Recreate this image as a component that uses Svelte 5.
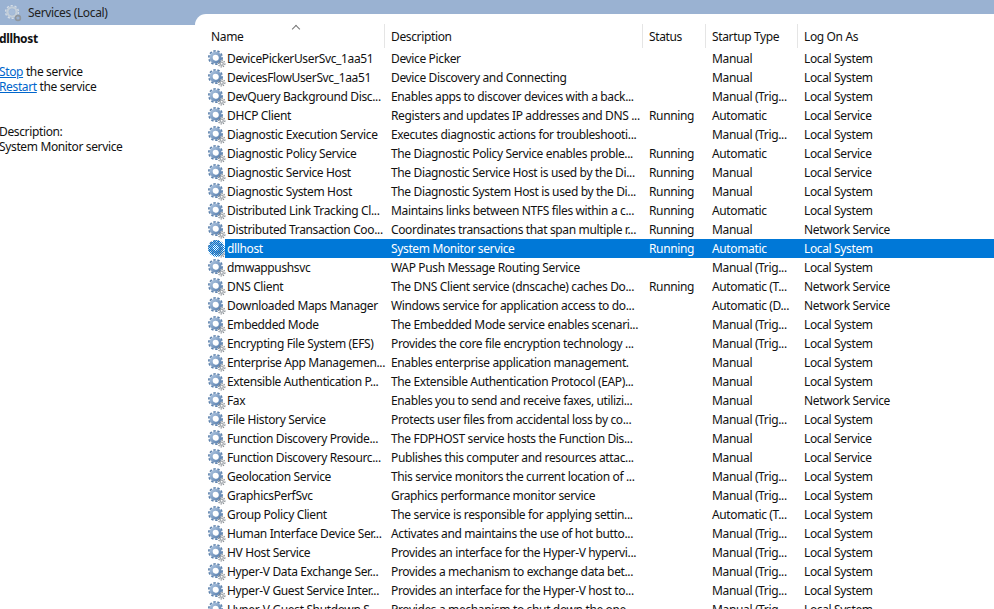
<script>
  const rows = [
    ['DevicePickerUserSvc_1aa51', 'Device Picker', '', 'Manual', 'Local System'],
    ['DevicesFlowUserSvc_1aa51', 'Device Discovery and Connecting', '', 'Manual', 'Local System'],
    ['DevQuery Background Disc...', 'Enables apps to discover devices with a back...', '', 'Manual (Trig...', 'Local System'],
    ['DHCP Client', 'Registers and updates IP addresses and DNS ...', 'Running', 'Automatic', 'Local Service'],
    ['Diagnostic Execution Service', 'Executes diagnostic actions for troubleshooti...', '', 'Manual (Trig...', 'Local System'],
    ['Diagnostic Policy Service', 'The Diagnostic Policy Service enables proble...', 'Running', 'Automatic', 'Local Service'],
    ['Diagnostic Service Host', 'The Diagnostic Service Host is used by the Di...', 'Running', 'Manual', 'Local Service'],
    ['Diagnostic System Host', 'The Diagnostic System Host is used by the Di...', 'Running', 'Manual', 'Local System'],
    ['Distributed Link Tracking Cl...', 'Maintains links between NTFS files within a c...', 'Running', 'Automatic', 'Local System'],
    ['Distributed Transaction Coo...', 'Coordinates transactions that span multiple r...', 'Running', 'Manual', 'Network Service'],
    ['dllhost', 'System Monitor service', 'Running', 'Automatic', 'Local System'],
    ['dmwappushsvc', 'WAP Push Message Routing Service', '', 'Manual (Trig...', 'Local System'],
    ['DNS Client', 'The DNS Client service (dnscache) caches Do...', 'Running', 'Automatic (T...', 'Network Service'],
    ['Downloaded Maps Manager', 'Windows service for application access to do...', '', 'Automatic (D...', 'Network Service'],
    ['Embedded Mode', 'The Embedded Mode service enables scenari...', '', 'Manual (Trig...', 'Local System'],
    ['Encrypting File System (EFS)', 'Provides the core file encryption technology ...', '', 'Manual (Trig...', 'Local System'],
    ['Enterprise App Managemen...', 'Enables enterprise application management.', '', 'Manual', 'Local System'],
    ['Extensible Authentication P...', 'The Extensible Authentication Protocol (EAP)...', '', 'Manual', 'Local System'],
    ['Fax', 'Enables you to send and receive faxes, utilizi...', '', 'Manual', 'Network Service'],
    ['File History Service', 'Protects user files from accidental loss by co...', '', 'Manual (Trig...', 'Local System'],
    ['Function Discovery Provide...', 'The FDPHOST service hosts the Function Dis...', '', 'Manual', 'Local Service'],
    ['Function Discovery Resourc...', 'Publishes this computer and resources attac...', '', 'Manual', 'Local Service'],
    ['Geolocation Service', 'This service monitors the current location of ...', '', 'Manual (Trig...', 'Local System'],
    ['GraphicsPerfSvc', 'Graphics performance monitor service', '', 'Manual (Trig...', 'Local System'],
    ['Group Policy Client', 'The service is responsible for applying settin...', '', 'Automatic (T...', 'Local System'],
    ['Human Interface Device Ser...', 'Activates and maintains the use of hot butto...', '', 'Manual (Trig...', 'Local System'],
    ['HV Host Service', 'Provides an interface for the Hyper-V hypervi...', '', 'Manual (Trig...', 'Local System'],
    ['Hyper-V Data Exchange Ser...', 'Provides a mechanism to exchange data bet...', '', 'Manual (Trig...', 'Local System'],
    ['Hyper-V Guest Service Inter...', 'Provides an interface for the Hyper-V host to...', '', 'Manual (Trig...', 'Local System'],
    ['Hyper-V Guest Shutdown S...', 'Provides a mechanism to shut down the ope...', '', 'Manual (Trig...', 'Local System']
  ]
  const selected = 'dllhost'
</script>

{#snippet gear(sel)}
  <svg class="gear" width="18" height="18" viewBox="0 0 18 18">
    <circle cx="7.5" cy="7.5" r="6.6" fill="none" stroke="#5f83ad" stroke-width="1.8" stroke-dasharray="2.4 1.7" />
    <circle cx="7.5" cy="7.5" r="4.4" fill="none" stroke="url(#steel)" stroke-width="3.2" />
    <circle cx="8" cy="8" r="2.7" fill="#fff" />
    <circle cx="13.7" cy="13.7" r="3.2" fill="none" stroke="#7f858b" stroke-width="1.1" stroke-dasharray="1.3 1.1" />
    <circle cx="13.7" cy="13.7" r="2.2" fill="#a3a8ad" />
    <circle cx="13.7" cy="13.7" r="0.9" fill="#fff" />
    {#if sel}
      <circle cx="8.5" cy="8.5" r="8.5" fill="url(#dither)" />
    {/if}
  </svg>
{/snippet}

<svg width="0" height="0" class="defs">
  <defs>
    <pattern id="dither" width="2" height="2" patternUnits="userSpaceOnUse">
      <rect width="1" height="1" fill="#0078d7" />
      <rect x="1" y="1" width="1" height="1" fill="#0078d7" />
    </pattern>
    <linearGradient id="steel" x1="0" y1="0" x2="1" y2="1">
      <stop offset="0" stop-color="#a9c1dd" />
      <stop offset="1" stop-color="#5c82b0" />
    </linearGradient>
  </defs>
</svg>

<div class="window">
  <aside class="left">
    <header class="title">
      <svg class="title-icon" width="18" height="18" viewBox="0 0 18 18">
        <circle cx="8" cy="8" r="6.4" fill="none" stroke="#d5dde6" stroke-width="1.4" stroke-dasharray="2.2 1.8" />
        <circle cx="8" cy="8" r="4.6" fill="none" stroke="#c3ced9" stroke-width="2.4" />
        <circle cx="8" cy="8" r="3" fill="#a6bcd8" />
        <circle cx="14" cy="14" r="2.4" fill="none" stroke="#8f969d" stroke-width="1.6" />
      </svg>
      <span>Services (Local)</span>
    </header>
    <div class="info">
      <h2>dllhost</h2>
      <p class="actions">
        <!-- svelte-ignore a11y_invalid_attribute -->
        <a href="#">Stop</a> the service<br />
        <!-- svelte-ignore a11y_invalid_attribute -->
        <a href="#">Restart</a> the service
      </p>
      <p class="desc">Description:<br />System Monitor service</p>
    </div>
  </aside>

  <main class="right">
    <div class="pane">
      <div class="head">
        <div class="h first"><span class="sort"></span>Name</div>
        <div class="h">Description</div>
        <div class="h">Status</div>
        <div class="h">Startup Type</div>
        <div class="h">Log On As</div>
      </div>
      {#each rows as r}
        <div class="row" class:sel={r[0] === selected}>
          <div class="icon">{@render gear(r[0] === selected)}</div>
          <div class="c name">{r[0]}</div>
          <div class="c">{r[1]}</div>
          <div class="c">{r[2]}</div>
          <div class="c">{r[3]}</div>
          <div class="c">{r[4]}</div>
        </div>
      {/each}
    </div>
  </main>
</div>

<style>
  :global(body) {
    margin: 0;
    background: #fff;
  }
  .defs {
    position: absolute;
  }
  .window {
    display: flex;
    height: 609px;
    overflow: hidden;
    font-family: "Noto Sans", "Open Sans", sans-serif;
    font-size: 12px;
    color: #111;
    letter-spacing: -0.36px;
  }
  .left {
    width: 195px;
    flex: none;
    overflow: hidden;
  }
  .title {
    height: 25px;
    background: #9ab2d2;
    display: flex;
    align-items: center;
    padding-left: 4px;
    gap: 6px;
    box-sizing: border-box;
    color: #222;
  }
  .info {
    line-height: 15px;
    margin-left: -1px;
  }
  .info h2 {
    margin: 6px 0 0;
    font-size: 12px;
    line-height: 15px;
    font-weight: 700;
  }
  .info p {
    margin: 0;
  }
  .actions {
    padding-top: 18px;
  }
  .desc {
    padding-top: 30px;
  }
  .info a {
    color: #0066cc;
  }
  .right {
    flex: 1;
    background: #9ab2d2;
    padding-top: 14px;
    min-width: 0;
  }
  .pane {
    background: #fff;
    border-top-left-radius: 11px;
    height: 100%;
    padding-left: 14px;
  }
  .head {
    display: grid;
    grid-template-columns: 176px 258px 63px 92px 1fr;
    padding-top: 10px;
    height: 24px;
    margin-bottom: 1px;
  }
  .h {
    border-right: 1px solid #e5e5e5;
    padding-left: 6px;
    line-height: 26px;
    height: 24px;
    position: relative;
    box-sizing: border-box;
  }
  .h.first {
    padding-left: 2px;
  }
  .h:last-child {
    border-right: 0;
  }
  .sort {
    position: absolute;
    left: 84px;
    top: 2px;
    width: 5px;
    height: 5px;
    border-left: 1px solid #777;
    border-top: 1px solid #777;
    transform: rotate(45deg);
  }
  .row {
    display: grid;
    grid-template-columns: 16px 159px 258px 63px 92px 1fr;
    height: 19px;
    line-height: 19px;
    white-space: nowrap;
  }
  .icon {
    background: #fff;
    height: 19px;
  }
  .gear {
    display: block;
    margin-left: -1px;
    margin-top: 1px;
  }
  .c {
    padding-left: 7px;
  }
  .name {
    padding-left: 2px;
  }
  .row.sel .c {
    background: #0078d7;
    color: #fff;
  }
</style>
